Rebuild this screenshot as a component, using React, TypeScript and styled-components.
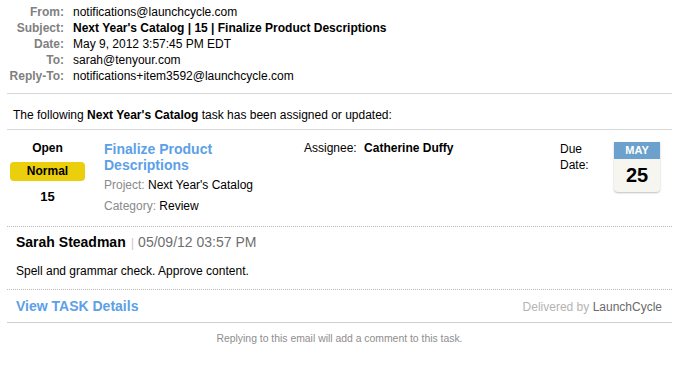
import React from 'react';
import styled, { createGlobalStyle } from 'styled-components';

const GlobalStyle = createGlobalStyle`
  body {
    margin: 0;
    background: #fff;
    font-family: 'Liberation Sans', Arial, Helvetica, sans-serif;
    color: #000;
  }
`;

const headers = [
  { label: 'From:', value: 'notifications@launchcycle.com' },
  { label: 'Subject:', value: "Next Year's Catalog | 15 | Finalize Product Descriptions", bold: true },
  { label: 'Date:', value: 'May 9, 2012 3:57:45 PM EDT' },
  { label: 'To:', value: 'sarah@tenyour.com' },
  { label: 'Reply-To:', value: 'notifications+item3592@launchcycle.com' },
];

export default function App() {
  return (
    <>
      <GlobalStyle />
      <Page>
        <HeaderGrid>
          {headers.map((h) => (
            <React.Fragment key={h.label}>
              <HeaderLabel>{h.label}</HeaderLabel>
              <HeaderValue $bold={h.bold}>{h.value}</HeaderValue>
            </React.Fragment>
          ))}
        </HeaderGrid>

        <Intro>
          The following <b>Next Year's Catalog</b> task has been assigned or updated:
        </Intro>

        <TaskRow>
          <StatusCol>
            <Status>Open</Status>
            <Priority>Normal</Priority>
            <TaskNumber>15</TaskNumber>
          </StatusCol>
          <TitleCol>
            <TaskTitle>Finalize Product Descriptions</TaskTitle>
            <Meta $gap={4}>
              <span>Project:</span> Next Year's Catalog
            </Meta>
            <Meta $gap={5}>
              <span>Category:</span> Review
            </Meta>
          </TitleCol>
          <AssigneeCol>
            Assignee: <b>Catherine Duffy</b>
          </AssigneeCol>
          <DueLabel>
            Due
            <br />
            Date:
          </DueLabel>
          <Calendar>
            <CalMonth>MAY</CalMonth>
            <CalDay>25</CalDay>
          </Calendar>
        </TaskRow>

        <Comment>
          <CommentHead>
            <Author>Sarah Steadman</Author>
            <Pipe>|</Pipe>
            <Stamp>05/09/12 03:57 PM</Stamp>
          </CommentHead>
          <CommentBody>Spell and grammar check. Approve content.</CommentBody>
        </Comment>

        <ActionRow>
          <DetailsLink href="#">View TASK Details</DetailsLink>
          <Delivered>
            Delivered by <span>LaunchCycle</span>
          </Delivered>
        </ActionRow>

        <Footer>Replying to this email will add a comment to this task.</Footer>
      </Page>
    </>
  );
}

const Page = styled.div`
  width: 665px;
  margin-left: 7px;
  font-size: 12px;
`;

const HeaderGrid = styled.div`
  display: grid;
  grid-template-columns: 57px 1fr;
  column-gap: 9px;
  padding: 4px 0 9px;
  line-height: 16px;
  border-bottom: 1px solid #d8d8d8;
`;

const HeaderLabel = styled.div`
  text-align: right;
  font-weight: bold;
  color: #808080;
`;

const HeaderValue = styled.div<{ $bold?: boolean }>`
  font-weight: ${(p) => (p.$bold ? 'bold' : 'normal')};
  color: #000;
`;

const Intro = styled.div`
  padding: 14px 6px 6px;
  line-height: 15px;
  border-bottom: 1px solid #d8d8d8;
`;

const TaskRow = styled.div`
  display: flex;
  align-items: flex-start;
  padding: 11px 0 12px;
  border-bottom: 1px dotted #bbb;
`;

const StatusCol = styled.div`
  width: 75px;
  margin-left: 3px;
  display: flex;
  flex-direction: column;
  align-items: center;
  font-weight: bold;
`;

const Status = styled.div`
  line-height: 14px;
`;

const Priority = styled.div`
  margin-top: 7px;
  width: 100%;
  height: 19px;
  line-height: 19px;
  text-align: center;
  background: #eccf0c;
  border-radius: 4px;
`;

const TaskNumber = styled.div`
  margin-top: 8px;
  font-size: 13px;
  line-height: 16px;
`;

const TitleCol = styled.div`
  width: 186px;
  margin-left: 19px;
`;

const TaskTitle = styled.div`
  font-size: 14px;
  font-weight: bold;
  line-height: 16px;
  color: #5ca0e8;
  width: 150px;
`;

const Meta = styled.div<{ $gap: number }>`
  margin-top: ${(p) => p.$gap}px;
  line-height: 16px;

  & > span {
    color: #8a8a8a;
  }
`;

const AssigneeCol = styled.div`
  width: 256px;
  margin-left: 14px;
  line-height: 14px;

  & > b {
    margin-left: 4px;
  }
`;

const DueLabel = styled.div`
  width: 54px;
  line-height: 16px;
`;

const Calendar = styled.div`
  width: 46px;
  margin-top: 1px;
  border-radius: 0 0 4px 4px;
  background: #f6f5ef;
  box-shadow: 0 1px 2px rgba(0, 0, 0, 0.25);
  text-align: center;
  overflow: hidden;
`;

const CalMonth = styled.div`
  height: 17px;
  line-height: 17px;
  background: #6ba1cc;
  color: #fff;
  font-size: 11px;
  font-weight: bold;
`;

const CalDay = styled.div`
  height: 33px;
  line-height: 33px;
  font-size: 20px;
  font-weight: bold;
`;

const Comment = styled.div`
  padding: 7px 9px 11px;
  border-bottom: 1px dotted #bbb;
`;

const CommentHead = styled.div`
  display: flex;
  align-items: baseline;
  line-height: 16px;
`;

const Author = styled.span`
  font-size: 14px;
  font-weight: bold;
`;

const Pipe = styled.span`
  color: #ccc;
  margin: 0 4px 0 5px;
  font-size: 13px;
`;

const Stamp = styled.span`
  color: #6f6f6f;
  font-size: 14px;
`;

const CommentBody = styled.div`
  margin-top: 13px;
  line-height: 14px;
`;

const ActionRow = styled.div`
  display: flex;
  justify-content: space-between;
  align-items: baseline;
  padding: 8px 10px 7px 9px;
  border-bottom: 1px solid #cfcfcf;
`;

const DetailsLink = styled.a`
  font-size: 14px;
  font-weight: bold;
  line-height: 16px;
  color: #5ca0e8;
  text-decoration: none;
`;

const Delivered = styled.div`
  color: #b4b4b4;
  line-height: 16px;

  & > span {
    color: #6a6a6a;
  }
`;

const Footer = styled.div`
  padding-top: 10px;
  text-align: center;
  font-size: 10.4px;
  line-height: 12px;
  color: #8e8e8e;
`;
